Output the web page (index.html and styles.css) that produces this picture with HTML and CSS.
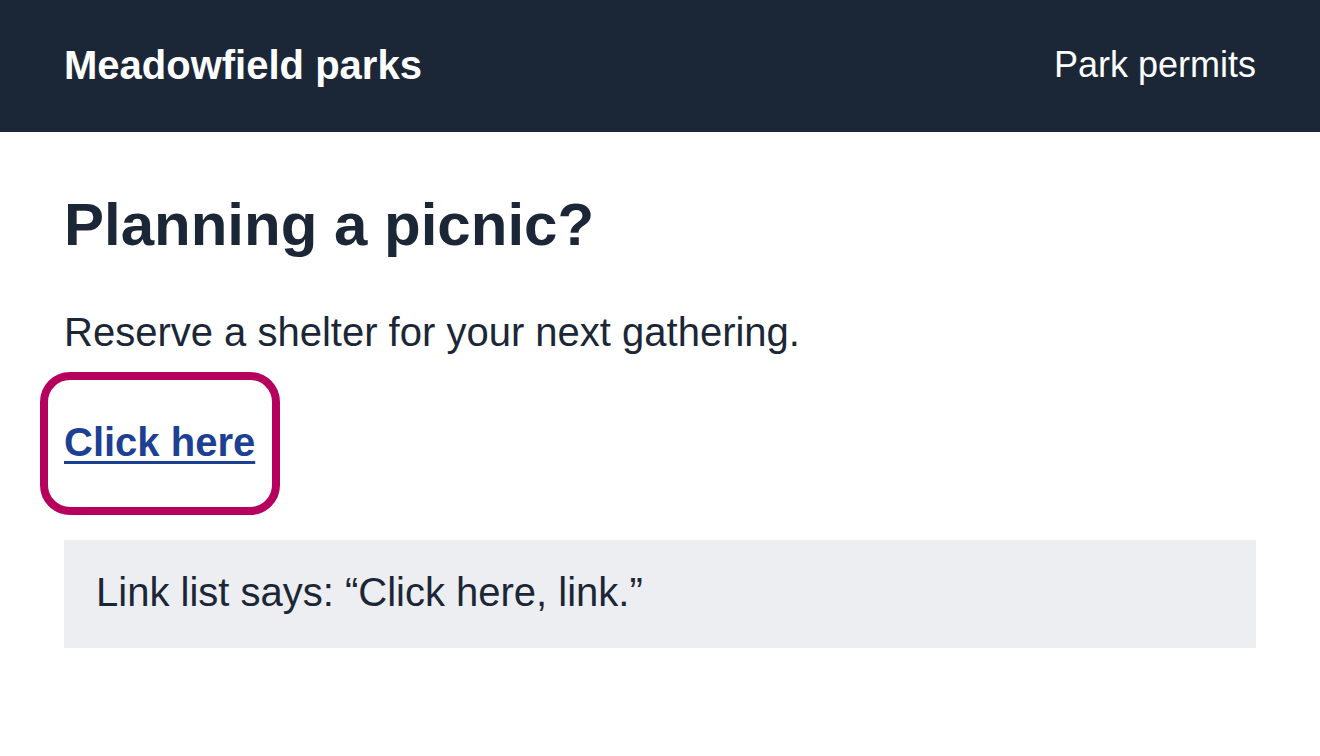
FILE: index.html
```html
<!DOCTYPE html>
<html lang="en">
<head>
  <meta charset="UTF-8">
  <title>Meadowfield parks</title>
  <link rel="stylesheet" href="styles.css">
</head>
<body>
  <header class="topbar">
    <div class="brand">Meadowfield parks</div>
    <nav class="nav">Park permits</nav>
  </header>
  <main class="page">
    <h1 class="titulo">Planning a picnic?</h1>
    <p class="intro">Reserve a shelter for your next gathering.</p>
    <a class="enlace" href="#">Click here</a>
    <div class="nota">Link list says: “Click here, link.”</div>
  </main>
</body>
</html>
```

FILE: styles.css
```css
* {
  margin: 0;
  padding: 0;
  box-sizing: border-box;
}
body {
  font-family: 'Liberation Sans', Arial, sans-serif;
  color: #1b2736;
  background: #fff;
}
.topbar {
  height: 132px;
  background: #1b2736;
  color: #fff;
  display: flex;
  justify-content: space-between;
  align-items: center;
  padding: 0 64px 2px;
}
.brand {
  font-size: 40px;
  font-weight: bold;
}
.nav {
  font-size: 36px;
}
.page {
  padding: 57px 64px 0;
}
.titulo {
  font-size: 60px;
  line-height: 72px;
  font-weight: bold;
}
.intro {
  font-size: 40px;
  line-height: 60px;
  margin-top: 41px;
}
.enlace {
  display: inline-block;
  margin: 18px 0 0 -16px;
  padding: 32px 17px 35px 16px;
  font-size: 40px;
  line-height: 60px;
  font-weight: bold;
  color: #1d3f94;
  text-decoration: underline;
  text-decoration-thickness: 3px;
  text-underline-offset: 5px;
  outline: 8px solid #b5005e;
  border-radius: 22px;
}
.nota {
  margin-top: 33px;
  background: #edeef2;
  padding: 22px 32px 26px;
  font-size: 40px;
  line-height: 60px;
}
```
